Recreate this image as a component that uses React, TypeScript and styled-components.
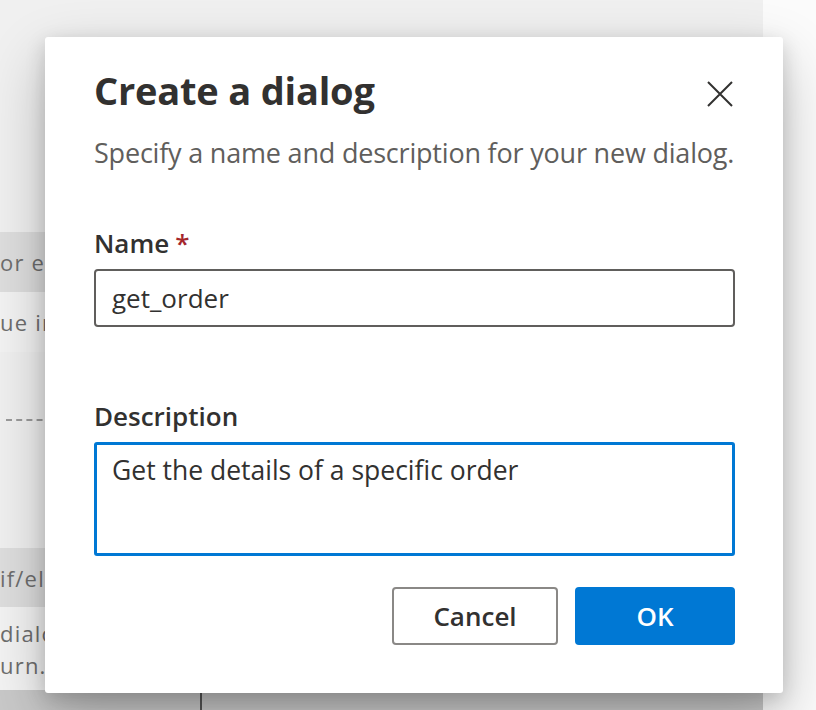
import React from "react";
import styled, { createGlobalStyle } from "styled-components";

const Global = createGlobalStyle`
  html, body { margin: 0; padding: 0; }
  body { font-family: "Open Sans", "Noto Sans", sans-serif; background: #f7f7f7; }
  * { box-sizing: border-box; }
`;

const Page = styled.div`
  position: relative;
  width: 816px;
  height: 710px;
  overflow: hidden;
  display: grid;
  grid-template-columns: 763px 1fr;
  background: #fafafa;
`;

const Main = styled.div`
  display: flex;
  flex-direction: column;
  background: #f0f0f0;
`;

const SideStrip = styled.div`
  background: #fbfbfb;
`;

const Spacer = styled.div<{ $h: number }>`
  height: ${(p) => p.$h}px;
  flex: none;
`;

const BgRow = styled.div<{ $dark?: boolean; $h: number }>`
  height: ${(p) => p.$h}px;
  flex: none;
  width: 220px;
  background: ${(p) => (p.$dark ? "#dedede" : "#f3f3f3")};
  display: flex;
  flex-direction: column;
  justify-content: center;
  font-size: 22px;
  line-height: 32px;
  letter-spacing: 1.2px;
  color: #6e6e6e;
  white-space: nowrap;
  overflow: hidden;
`;

const Dashed = styled.div`
  width: 220px;
  margin-left: 6px;
  border-top: 2px dashed #9a9a9a;
  flex: none;
`;

const BottomBar = styled.div`
  flex: 1;
  background: #c9c9c9;
  display: grid;
  grid-template-columns: 202px 1fr;
`;

const BottomCell = styled.div`
  border-right: 2px solid #555;
`;

const Dialog = styled.div`
  position: absolute;
  left: 45px;
  top: 37px;
  width: 738px;
  height: 656px;
  background: #ffffff;
  border-radius: 3px;
  box-shadow: 0 24px 60px rgba(0, 0, 0, 0.24), 0 6px 20px rgba(0, 0, 0, 0.16);
  padding: 28px 48px 0 49px;
  display: flex;
  flex-direction: column;
  color: #323130;
`;

const Header = styled.div`
  display: flex;
  align-items: center;
  justify-content: space-between;
`;

const Title = styled.h1`
  margin: 0;
  font-size: 38px;
  font-weight: 700;
  line-height: 50px;
  color: #323130;
  letter-spacing: -0.2px;
`;

const CloseButton = styled.button`
  border: none;
  background: transparent;
  padding: 0;
  width: 30px;
  height: 30px;
  display: flex;
  align-items: center;
  justify-content: center;
  margin-top: 8px;
  cursor: pointer;
`;

const SubText = styled.p`
  margin: 20px 0 0;
  font-size: 27px;
  line-height: 36px;
  color: #605e5c;
  letter-spacing: -0.2px;
`;

const Field = styled.div<{ $top: number }>`
  margin-top: ${(p) => p.$top}px;
  display: flex;
  flex-direction: column;
`;

const Label = styled.label`
  font-size: 26px;
  font-weight: 600;
  line-height: 36px;
  color: #323130;
  padding-bottom: 8px;
`;

const Required = styled.span`
  color: #a4262c;
  margin-left: 6px;
`;

const TextInput = styled.div`
  height: 58px;
  border: 2px solid #605e5c;
  border-radius: 4px;
  padding: 0 16px;
  display: flex;
  align-items: center;
  font-size: 26px;
  color: #323130;
`;

const TextArea = styled.div`
  height: 114px;
  border: 3px solid #0078d4;
  border-radius: 3px;
  padding: 7px 15px;
  font-size: 26.5px;
  line-height: 36px;
  color: #323130;
`;

const Footer = styled.div`
  margin-top: 31px;
  display: flex;
  justify-content: flex-end;
  gap: 17px;
`;

const Button = styled.button<{ $primary?: boolean; $w: number }>`
  width: ${(p) => p.$w}px;
  height: 58px;
  border-radius: 4px;
  font-family: "Open Sans", "Noto Sans", sans-serif;
  font-size: 26px;
  font-weight: 600;
  border: ${(p) => (p.$primary ? "none" : "2px solid #8a8886")};
  background: ${(p) => (p.$primary ? "#0078d4" : "#ffffff")};
  color: ${(p) => (p.$primary ? "#ffffff" : "#323130")};
  cursor: pointer;
`;

export default function App() {
  return (
    <>
      <Global />
      <Page>
        <Main>
          <Spacer $h={232} />
          <BgRow $dark $h={60}>or each</BgRow>
          <BgRow $h={60}>ue in</BgRow>
          <Spacer $h={67} />
          <Dashed />
          <Spacer $h={127} />
          <BgRow $dark $h={59}>if/else</BgRow>
          <BgRow $h={83}>
            <span>dialog</span>
            <span>urn.A</span>
          </BgRow>
          <BottomBar>
            <BottomCell />
            <div />
          </BottomBar>
        </Main>
        <SideStrip />
        <Dialog role="dialog">
          <Header>
            <Title>Create a dialog</Title>
            <CloseButton aria-label="Close">
              <svg width="26" height="26" viewBox="0 0 26 26">
                <path d="M1 1 L25 25 M25 1 L1 25" stroke="#323130" strokeWidth="2" fill="none" />
              </svg>
            </CloseButton>
          </Header>
          <SubText>Specify a name and description for your new dialog.</SubText>
          <Field $top={54}>
            <Label>
              Name<Required>*</Required>
            </Label>
            <TextInput>get_order</TextInput>
          </Field>
          <Field $top={71}>
            <Label>Description</Label>
            <TextArea>Get the details of a specific order</TextArea>
          </Field>
          <Footer>
            <Button $w={166}>Cancel</Button>
            <Button $primary $w={160}>OK</Button>
          </Footer>
        </Dialog>
      </Page>
    </>
  );
}
